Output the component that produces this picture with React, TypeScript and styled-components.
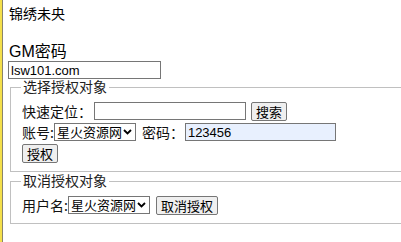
import styled, { createGlobalStyle } from 'styled-components'

const GlobalStyle = createGlobalStyle`
  html, body {
    margin: 0;
    padding: 0;
    background: #ffffff;
  }
  body {
    font-family: "Liberation Sans", "Noto Sans CJK SC", sans-serif;
    font-size: 13px;
    color: #000;
  }
`

const Page = styled.div`
  width: 430px;
  min-height: 242px;
  box-sizing: border-box;
  border-left: 2px solid #f4df4a;
  box-shadow: inset 1px 0 0 #8a846a;
  padding: 6px 0 0 6px;
`

const Title = styled.div`
  font-size: 14px;
  line-height: 17px;
  margin-left: 1px;
  height: 36px;
`

const Label = styled.div`
  font-size: 16px;
  line-height: 19px;
  margin-left: 1px;
`

const TextInput = styled.input<{ $w: number; $filled?: boolean }>`
  box-sizing: border-box;
  width: ${(p) => p.$w}px;
  height: 18px;
  padding: 0 2px;
  border: 1px solid #767676;
  border-radius: 0;
  background: ${(p) => (p.$filled ? '#e8f0fe' : '#fff')};
  font-family: "Liberation Sans", "Noto Sans CJK SC", sans-serif;
  font-size: 13px;
  color: #000;
  outline: none;
`

const Group = styled.fieldset`
  margin: 0 0 1px 2px;
  padding: 6px 12px 8px 11px;
  border: 1px solid #c0c0c0;
  border-right: none;
  display: flex;
  flex-direction: column;
  gap: 1px;
`

const Legend = styled.legend`
  padding: 0 2px;
  margin-left: -1px;
  font-size: 14px;
  line-height: 16px;
  color: #222;
`

const Row = styled.div`
  display: flex;
  align-items: center;
  height: 20px;
  white-space: nowrap;
`

const Text = styled.span<{ $gap?: number; $ml?: number }>`
  font-family: "Noto Sans CJK SC", sans-serif;
  font-size: 14px;
  margin-left: ${(p) => p.$ml ?? 0}px;
  margin-right: ${(p) => p.$gap ?? 0}px;
  color: #111;
`

const Button = styled.button<{ $ml?: number }>`
  box-sizing: border-box;
  height: 19px;
  padding: 0 4px;
  margin-left: ${(p) => p.$ml ?? 0}px;
  border: 1px solid #767676;
  border-radius: 2px;
  background: #efefef;
  font-family: "Noto Sans CJK SC", sans-serif;
  font-size: 13px;
  line-height: 17px;
  color: #000;
`

const SelectBox = styled.span`
  position: relative;
  display: inline-flex;
  width: 82px;
  height: 18px;
`

const Select = styled.select`
  appearance: none;
  box-sizing: border-box;
  width: 100%;
  height: 100%;
  padding: 0 0 0 2px;
  border: 1px solid #767676;
  border-radius: 0;
  background: #fff;
  font-family: "Noto Sans CJK SC", sans-serif;
  font-size: 13px;
  line-height: 16px;
  color: #000;
  outline: none;
`

const Chevron = styled.svg`
  position: absolute;
  right: 4px;
  top: 6px;
  pointer-events: none;
`

function Picker() {
  return (
    <SelectBox>
      <Select>
        <option>星火资源网</option>
      </Select>
      <Chevron width="9" height="6" viewBox="0 0 9 6">
        <path d="M1 1 L4.5 4.5 L8 1" fill="none" stroke="#000" strokeWidth="1.8" />
      </Chevron>
    </SelectBox>
  )
}

export default function App() {
  return (
    <>
      <GlobalStyle />
      <Page>
        <Title>锦绣未央</Title>
        <Label>GM密码</Label>
        <TextInput $w={153} defaultValue="lsw101.com" />
        <Group>
          <Legend>选择授权对象</Legend>
          <Row>
            <Text $gap={2}>快速定位：</Text>
            <TextInput $w={152} />
            <Button $ml={5}>搜索</Button>
          </Row>
          <Row>
            <Text>账号:</Text>
            <Picker />
            <Text $ml={6} $gap={1}>密码：</Text>
            <TextInput $w={151} $filled defaultValue="123456" />
          </Row>
          <Row>
            <Button>授权</Button>
          </Row>
        </Group>
        <Group>
          <Legend>取消授权对象</Legend>
          <Row>
            <Text>用户名:</Text>
            <Picker />
            <Button $ml={6}>取消授权</Button>
          </Row>
        </Group>
      </Page>
    </>
  )
}
